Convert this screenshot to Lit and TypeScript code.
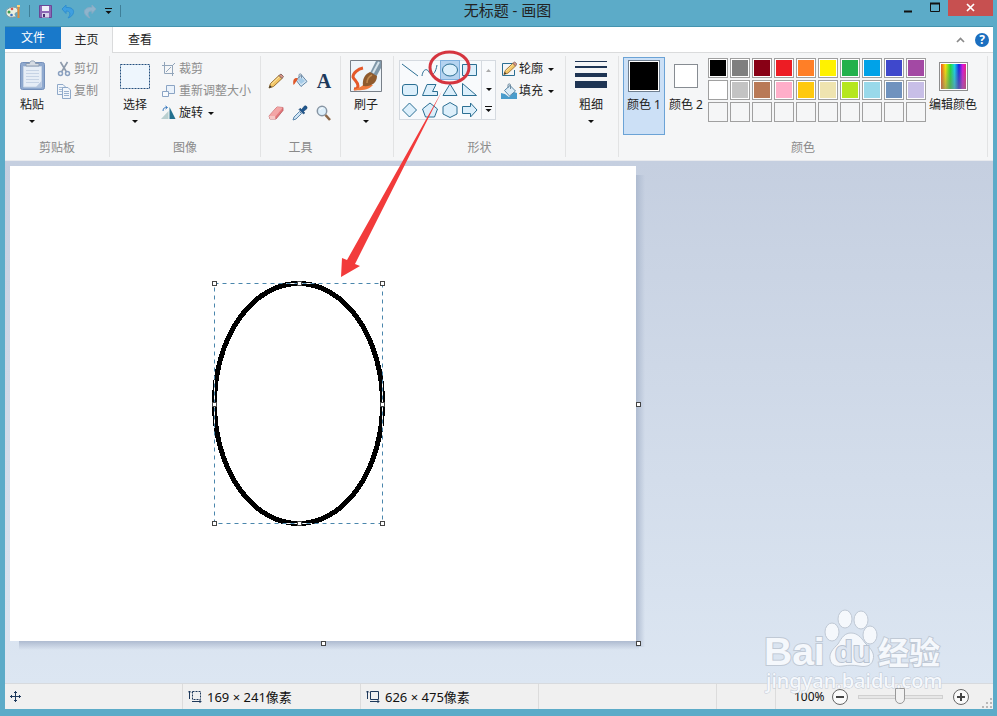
import { LitElement, html, css, svg } from "lit";
import { customElement } from "lit/decorators.js";
import { styleMap } from "lit/directives/style-map.js";
import { classMap } from "lit/directives/class-map.js";

const COLORS: (string | null)[] = [
  "#000000", "#7f7f7f", "#880015", "#ed1c24", "#ff7f27", "#fff200", "#22b14c", "#00a2e8", "#3f48cc", "#a349a4",
  "#ffffff", "#c3c3c3", "#b97a57", "#ffaec9", "#ffc90e", "#efe4b0", "#b5e61d", "#99d9ea", "#7092be", "#c8bfe7",
  null, null, null, null, null, null, null, null, null, null,
];

const SHAPES = [
  { name: "直线", art: svg`<path d="M2 4L18 16"/>` },
  { name: "曲线", art: svg`<path d="M2 16C3 9 7 8 9 12S15 16 17 5"/>` },
  { name: "椭圆形", art: svg`<ellipse cx="10" cy="10" rx="7.5" ry="6"/>` },
  { name: "矩形", art: svg`<path d="M2.5 4.500H16.500V15.500H2.500Z"/>` },
  { name: "圆角矩形", art: svg`<rect x="2.500" y="4.500" width="15" height="11" rx="2.500"/>` },
  { name: "多边形", art: svg`<path d="M2.500 15.500L7 4.500H16L12.500 11.500H17.500V15.500Z"/>` },
  { name: "三角形", art: svg`<path d="M10 4L17 15.500H3Z"/>` },
  { name: "直角三角形", art: svg`<path d="M2.500 3.500V15.500H16.500Z"/>` },
  { name: "菱形", art: svg`<path d="M9.500 3L16.500 10L9.500 17L2.500 10Z"/>` },
  { name: "五边形", art: svg`<path d="M10 3L17.500 9L14.500 17H5.500L2.500 9Z"/>` },
  { name: "六边形", art: svg`<path d="M10 2.500L17 6.500V14L10 17.500L3 14V6.500Z"/>` },
  { name: "右箭头", art: svg`<path d="M2.500 6.500H10.500V3L17 10L10.500 17V13.500H2.500Z"/>` },
];

const icon = (w: number, h: number, art: unknown) =>
  html`<svg class="icon" width=${w} height=${h} viewBox="0 0 ${w} ${h}" fill="none" aria-hidden="true">${art}</svg>`;

const caret = () => icon(6, 3, svg`<path d="M0 0H6L3 3Z" fill="#111"/>`);

const pencil = svg`<path d="M1 15L2.500 10.500L11 2.500L14 5.500L5.500 13.500Z" fill="#f3c667" stroke="#9a7133"/><path d="M3.500 11L11.500 3.500" stroke="#fbe9ae"/><path d="M11 2.500L13 1L15.500 3.500L14 5.500Z" fill="#d9958a" stroke="#8a6a62"/><path d="M1 15L2 12.200L3.800 14Z" fill="#333"/>`;

const art = {
  palette: svg`<path d="M1 8C1 3 12 1 13 6C14 9 10 8 10 10C10 12 13 13 9 13C4 14 1 12 1 8Z" fill="#e9f0e2" stroke="#7d98a0"/><circle cx="4" cy="8" r="1.500" fill="#3d9b50"/><circle cx="7" cy="5" r="1.300" fill="#d8574b"/><circle cx="6.500" cy="11" r="1.300" fill="#3a70c0"/><path d="M13.500 1V14" stroke="#e08a3a" stroke-width="2"/><path d="M12 2H15" stroke="#ffd27a" stroke-width="2"/>`,
  save: svg`<path d="M1.500 1.500H13.500V13.500H1.500Z" fill="#8d68b5" stroke="#6a4896"/><path d="M4 2H11V7H4Z" fill="#eef0f8"/><path d="M4 9H11V13.500H4Z" fill="#d8d3ea"/><path d="M5 10H7V13H5Z" fill="#4a3070"/>`,
  undo: svg`<path d="M1 5L5 1V3.500C11 3 13 6 12.500 8.500C12 11 10 13 7 14C10 10.500 9.500 7 5 7V9.500Z" fill="#3f9fe0" stroke="#2f8fd0"/>`,
  redo: svg`<path d="M13 5L9 1V3.500C3 3 1 6 1.500 8.500C2 11 4 13 7 14C4 10.500 4.500 7 9 7V9.500Z" fill="#8fb4cc" stroke="#86abc4"/>`,
  more: svg`<path d="M0 .500H7" stroke="#111"/><path d="M.500 3H6.500L3.500 6Z" fill="#111"/>`,
  paste: svg`<rect x="4.500" y="2.500" width="24" height="27" rx="2" fill="#8fa9cf" stroke="#7590ba"/><path d="M7.500 6.500H25.500V27H7.500Z" fill="#e6edf6" stroke="#c8d5e6"/><path d="M10 10.500H23M10 13.500H23M10 16.500H23M10 19.500H23M10 22.500H23" stroke="#c6d3e5"/><path d="M10 6V3.500H13.500C13.500 0 19.500 0 19.500 3.500H23V6Z" fill="#d5dbe3" stroke="#8b9bb0"/><path d="M20 27L25.500 21V27Z" fill="#b5c6df"/>`,
  cut: svg`<path d="M4.500 1L10.500 11M11.500 1L5.500 11" stroke="#8d9aab" stroke-width="1.600"/><circle cx="4.500" cy="12.500" r="2" stroke="#8aa0c0" stroke-width="1.500"/><circle cx="11.500" cy="12.500" r="2" stroke="#8aa0c0" stroke-width="1.500"/>`,
  copy: svg`<path d="M1.500 1.500H7L9.500 4V11.500H1.500Z" fill="#f2f6fb" stroke="#8fa9c9"/><path d="M3 4.500H7M3 6.500H7M3 8.500H7" stroke="#a8bdd6"/><path d="M6.500 4.500H12L14.500 7V15.500H6.500Z" fill="#f2f6fb" stroke="#8fa9c9"/><path d="M8 8.500H13M8 10.500H13M8 12.500H13" stroke="#9ab2cf"/>`,
  select: svg`<path d="M1.500 4.500H30.500V28.500H1.500Z" fill="#eef6fd" stroke="#24507f" stroke-dasharray="2 1"/>`,
  crop: svg`<path d="M3.500 1V12.500H13M1 4.500H11.500V15M11 5L14 2M5 11L10 6" stroke="#92a5ba"/>`,
  resize: svg`<path d="M5.500 2.500H13.500V10.500H5.500Z" fill="#eaf2fb" stroke="#8ba4c4"/><path d="M1.500 8.500H7.500V13.500H1.500Z" fill="#f7fafd" stroke="#8ba4c4"/>`,
  rotate: svg`<path d="M7.500 6V14H0Z" fill="#b9cfd0"/><path d="M8.500 2V14H14.500Z" fill="#23708f"/><path d="M2 6C2 3 4 2 6 2.500M4.500 1L6.500 2.500L4.500 4" stroke="#3b7bc0"/>`,
  pencil,
  bucket: svg`<path d="M4 7L9.500 2L15 8.500L9 13.500Z" fill="#d5e6f3" stroke="#5f86a8"/><path d="M7 5.500V2C7 .500 9.500 .500 9.500 2V7" stroke="#7890a8"/><path d="M5 6L10 5L13 8L9 11Z" fill="#a5cbe8"/><path d="M5.500 5C2 4.500 .500 7 1.500 12C3.500 10.500 4 8 5.500 7Z" fill="#e0592b"/>`,
  eraser: svg`<path d="M1 11L9 2L15 2.500L15 5.500L8 14H2Z" fill="#e2777b" stroke="#b9585d" stroke-width=".8"/><path d="M1 11L9 2L15 2.500L7.500 11.500Z" fill="#f3a6a6"/><path d="M1 11H7L7.500 14H2Z" fill="#f6c7c5"/>`,
  picker: svg`<path d="M1 15L2 12L7.500 6.500L9.500 8.500L4 14Z" fill="#cfe4f4" stroke="#5c87ad"/><path d="M7 4.500L11.500 9L12.800 8L11.500 6.500L15 3.500C15.500 1.500 14 .500 12.500 1L9.500 4.500L8.200 3.300Z" fill="#1f578f" stroke="#153f6b" stroke-width=".6"/>`,
  magnifier: svg`<circle cx="6" cy="6" r="4.700" fill="#ddeffb" stroke="#8795a3" stroke-width="1.500"/><path d="M9.500 10L14 15" stroke="#8b6748" stroke-width="2.600"/><path d="M4 5C4.500 3.500 6 3 7 3" stroke="#fff"/>`,
  brush: svg`<path d="M.500 .500H31.500V31.500H.500Z" fill="#eef4f9" stroke="#777f88"/><path d="M13 8C8 9 3 13 3 17C4 20 8 22 8 26C8 28 6 29 4 29" stroke="#e4582a" stroke-width="3"/><path d="M3 30C10 31 19 30 23 25L14 24C12 27 7 28 3 30Z" fill="#ee7a3e"/><path d="M26 1H31V8L26 17L20 13Z" fill="#7f97a8"/><path d="M29 2L23 13" stroke="#d5e2ea" stroke-width="2"/><path d="M13 26C12 19 15 14 20 12L27 16C27 23 21 27 13 26Z" fill="#8e5a2d"/><path d="M17 23C17 19 18 17 22 15" stroke="#c18a50" stroke-width="1.500"/>`,
  outline: svg`<path d="M12 2.500H1.500V14.500H13.500V9" stroke="#2b6f93"/><g transform="translate(2 0) scale(.9)">${pencil}</g>`,
  fill: svg`<path d="M0 10L4 11L8 14L13 9L16 10V16H0Z" fill="#4a9ccc"/><path d="M3.500 7.500L9 2.500L14.500 8L8.500 13Z" fill="#dcecf7" stroke="#5886a6"/><path d="M7 5V2C7 .500 9.500 .500 9.500 2V6" stroke="#6d8aa0"/>`,
  lines: svg`<path d="M0 1.500H32" stroke="#1f3554"/><path d="M0 7H32" stroke="#1f3554" stroke-width="2"/><path d="M0 15H32" stroke="#1f3554" stroke-width="4"/><path d="M0 24.500H32" stroke="#1f3554" stroke-width="7"/>`,
  move: svg`<path d="M5.500 0V11M0 5.500H11" stroke="#1e395b"/><path d="M4 2L5.500 .500L7 2M4 9L5.500 10.500L7 9M2 4L.500 5.500L2 7M9 4L10.500 5.500L9 7" stroke="#1e395b"/>`,
  selSize: svg`<path d="M1.500 1V9M0 2.500L1.500 1L3 2.500M4 11.500H13M11.500 10L13 11.500L11.500 13" stroke="#1e395b"/><path d="M4.500 1.500H12.500V9.500H4.500Z" stroke="#1e395b" stroke-dasharray="2 1"/>`,
  imgSize: svg`<path d="M1.500 1V9M0 2.500L1.500 1L3 2.500M4 11.500H13M11.500 10L13 11.500L11.500 13" stroke="#1e395b"/><path d="M4.500 1.500H12.500V9.500H4.500Z" stroke="#1e395b"/>`,
};

@customElement("app-root")
export class AppRoot extends LitElement {
  static styles = css`
    :host {
      display: flex;
      flex-direction: column;
      position: relative;
      box-sizing: border-box;
      min-height: 100vh;
      padding: 0 4px 7px 5px;
      overflow: hidden;
      background: #5cabc8;
      color: #222;
      font: 12px/16px "Noto Sans", "Noto Sans CJK SC", sans-serif;
    }
    * { box-sizing: border-box; }
    button {
      font: inherit;
      color: inherit;
      background: none;
      border: 0;
      margin: 0;
      padding: 0;
      white-space: nowrap;
    }
    .icon { display: block; flex: none; }

    .titlebar { display: flex; height: 26px; }
    .quick { display: flex; align-items: center; gap: 8px; height: 22px; }
    .quick button { display: flex; }
    .quick .rule { width: 1px; height: 12px; background: #3f7f98; }
    .title { flex: 1; margin: 0; text-align: center; font-size: 15px; font-weight: 400; line-height: 20px; }
    .controls { display: flex; align-items: flex-start; }
    .controls button { display: flex; align-items: center; justify-content: center; width: 27px; height: 16px; }
    .controls .close { width: 45px; padding-bottom: 2px; background: #c75050; }

    .tabs { display: flex; align-items: flex-end; height: 27px; background: #fff; border-bottom: 1px solid #dadbdc; border-top: 1px solid #4493ae; }
    .tabs .file { align-self: flex-start; width: 56px; height: 22px; background: #1979ca; color: #fff; }
    .tabs .tab { width: 54px; height: 25px; }
    .tabs .current { width: 52px; height: 26px; margin-bottom: -1px; background: #f5f6f7; border-right: 1px solid #dadbdc; }
    .tabs .aside { display: flex; align-items: center; align-self: center; gap: 10px; margin-left: auto; padding-right: 4px; }
    .tabs .aside button { display: flex; }
    .help { align-items: center; justify-content: center; width: 14px; height: 14px; border-radius: 50%; background: #1b6fc0; color: #fff; font-weight: 700; }

    .ribbon { display: flex; height: 108px; padding: 3px 0; background: #f5f6f7; border-bottom: 1px solid #e8eaee; }
    .group { display: flex; flex-direction: column; flex: none; border-right: 1px solid #e2e3e4; }
    .body { display: flex; height: 84px; gap: 4px; padding: 0 4px; }
    .caption { margin: 0; font-size: 12px; font-weight: 400; line-height: 18px; text-align: center; color: #8a8a8a; }
    .clip { width: 105px; }
    .image { width: 151px; }
    .tools { width: 80px; }
    .brushes, .size { width: 53px; }
    .shapes { width: 172px; }
    .clip .body { gap: 2px; padding-left: 6px; }
    .tools .body { display: grid; grid-template-columns: repeat(3, 24px); grid-auto-rows: 24px; align-content: start; gap: 8px 0; padding: 13px 0 0 3px; }
    .tools button { display: flex; align-items: center; justify-content: center; }
    .tools .letter { font: 700 20px/20px "Liberation Serif", serif; color: #1e395b; }
    .brushes .body, .size .body { padding: 0 5px 0 4px; }
    .colors .body { gap: 0; padding-right: 9px; }

    .big { display: flex; flex-direction: column; align-items: center; flex: none; width: 42px; height: 78px; padding-top: 4px; border: 0 solid #6ba3d6; }
    .big .face { display: flex; align-items: center; justify-content: center; width: 32px; height: 32px; margin-bottom: 5px; }
    .big .caret { margin-top: 7px; }
    .big.on { margin-top: 1px; padding-top: 2px; border-width: 1px; background: #cce0f6; }
    .big.wide { width: 50px; margin-left: 2px; }
    .well { width: 24px; height: 24px; border: 1px solid #878c92; background: #fff; }
    .on .well { width: 32px; height: 32px; border-color: #6f7f90; background: #000; box-shadow: inset 0 0 0 1px #fff; }
    .spectrum {
      width: 29px; height: 29px; border: 1px solid #8d8d8d; box-shadow: inset 0 0 0 1px #fff;
      background: linear-gradient(transparent, #80808099), linear-gradient(90deg, #f03020, #ffe800 20%, #20e030 38%, #10d8f0 54%, #1020e8 70%, #e010e0 84%, #f02060);
    }

    .stack { display: flex; flex-direction: column; align-items: flex-start; padding-top: 2px; }
    .small { display: flex; align-items: center; gap: 2px; height: 22px; padding: 0 1px; }
    .small .caret { margin-left: 3px; }
    .small:disabled { color: #8d8d8d; }

    .gallery { display: flex; width: 97px; height: 60px; margin: 4px 0 0 1px; border: 1px solid #d5dae0; background: #f8fafc; }
    .cells { display: grid; grid-template-columns: repeat(4, 20px); grid-auto-rows: 20px; width: 81px; margin-top: -1px; }
    .cells button { width: 20px; height: 20px; }
    .cells .icon { stroke: #2b6f93; fill: #dceffb; }
    .cells .open .icon { fill: none; }
    .cells .picked { background: #b5d3f0; box-shadow: inset 0 0 0 1px #7fb0dd; }
    .scroller { display: grid; grid-template-rows: repeat(3, 1fr); flex: 1; border-left: 1px solid #d5dae0; }
    .scroller button { display: flex; align-items: center; justify-content: center; }

    .swatches { display: grid; grid-template-columns: repeat(10, 20px); grid-auto-rows: 20px; align-content: start; gap: 2px; margin: 2px 0 0 1px; }
    .swatch { border: 1px solid #a0a0a0; box-shadow: inset 0 0 0 1px #fff; }

    .stage { flex: 1; padding: 5px; background: linear-gradient(#c5cfe0, #dce6f2); }
    .paper { position: relative; width: 626px; height: 475px; background: #fff; }
    .paper::before, .paper::after { content: ""; position: absolute; }
    .paper::before { left: 100%; top: 9px; bottom: -6px; width: 9px; background: linear-gradient(90deg, #aebbd0, #aebbd000); }
    .paper::after { top: 100%; left: 9px; right: -3px; height: 9px; background: linear-gradient(#aebbd0, #aebbd000); }
    .drawing { display: block; }
    .grip { position: absolute; z-index: 1; width: 5px; height: 5px; border: 1px solid #444; background: #fff; }
    .grip.e { left: 100%; top: 236px; }
    .grip.s { top: 100%; left: 311px; }
    .grip.se { left: 100%; top: 100%; }

    .status { display: flex; height: 26px; background: #f0f0f0; border-top: 1px solid #d7dade; }
    .cell { display: flex; align-items: center; flex: none; gap: 5px; width: 178px; padding-left: 5px; border-right: 1px solid #dcdcdc; color: #111; font-size: 13px; }
    .cell.short { width: 59px; }
    .zoom { display: flex; align-items: center; flex: 1; gap: 7px; padding-left: 18px; color: #111; }
    .zoom button { display: flex; }
    .zoom input { appearance: none; flex: none; width: 85px; height: 16px; margin: 0 3px; padding: 0; background: none; }
    .zoom input::-webkit-slider-runnable-track { height: 4px; border: 1px solid #d0d0d0; background: #e7e7e7; }
    .zoom input::-webkit-slider-thumb {
      appearance: none; width: 10px; height: 16px; margin-top: -8px;
      border: 1px solid #999; border-radius: 0 0 5px 5px; background: #f2f2f2;
    }
    .corner { align-self: flex-end; margin-left: auto; padding: 0 1px 1px 0; }

    .pointer { position: absolute; left: 330px; top: 45px; z-index: 2; pointer-events: none; }
    .mark { position: absolute; right: 52px; bottom: 20px; z-index: 2; pointer-events: none; }
    .mark text { fill: #f5f8fc; stroke: #c0c9d5; stroke-width: 2px; paint-order: stroke; }
    .mark .latin { font: 700 39px "Liberation Sans", sans-serif; }
    .mark .du { font: 700 29px "Liberation Sans", sans-serif; fill: #dde5f0; stroke: #b9c3d1; }
    .mark .han { font: 700 31px "Noto Sans CJK SC", sans-serif; }
    .mark .site { font: 500 20px "Noto Sans", sans-serif; stroke-width: 1px; }
  `;

  private small(label: string, picture: unknown, opts: { off?: boolean; menu?: boolean } = {}) {
    return html`<button class="small" ?disabled=${opts.off}>
      ${icon(16, 16, picture)}<span>${label}</span>${opts.menu ? html`<span class="caret">${caret()}</span>` : null}
    </button>`;
  }

  private big(label: string, face: unknown, menu = true, extra = "") {
    return html`<button class="big ${extra}">
      <span class="face">${face}</span><span>${label}</span>
      ${menu ? html`<span class="caret">${caret()}</span>` : null}
    </button>`;
  }

  private titlebar() {
    return html`<header class="titlebar">
      <div class="quick">
        ${icon(16, 15, art.palette)}<span class="rule"></span>
        <button aria-label="保存">${icon(15, 15, art.save)}</button>
        <button aria-label="撤消">${icon(14, 15, art.undo)}</button>
        <button aria-label="重做">${icon(14, 15, art.redo)}</button>
        <button aria-label="自定义快速访问工具栏">${icon(7, 6, art.more)}</button>
        <span class="rule"></span>
      </div>
      <h1 class="title">无标题 - 画图</h1>
      <div class="controls">
        <button aria-label="最小化">${icon(10, 12, svg`<path d="M1 9.500H9" stroke="#111" stroke-width="2"/>`)}</button>
        <button aria-label="最大化">${icon(12, 12, svg`<path d="M1.500 1.500H10.500V9.500H1.500Z" stroke="#111"/><path d="M1 1.500H11" stroke="#111" stroke-width="2"/>`)}</button>
        <button class="close" aria-label="关闭">${icon(9, 9, svg`<path d="M1 1L8 8M8 1L1 8" stroke="#fff" stroke-width="1.700"/>`)}</button>
      </div>
    </header>`;
  }

  private ribbon() {
    return html`<section class="ribbon">
      <div class="group clip">
        <div class="body">
          ${this.big("粘贴", icon(32, 32, art.paste))}
          <div class="stack">
            ${this.small("剪切", art.cut, { off: true })}
            ${this.small("复制", art.copy, { off: true })}
          </div>
        </div>
        <h2 class="caption">剪贴板</h2>
      </div>
      <div class="group image">
        <div class="body">
          ${this.big("选择", icon(32, 32, art.select))}
          <div class="stack">
            ${this.small("裁剪", art.crop, { off: true })}
            ${this.small("重新调整大小", art.resize, { off: true })}
            ${this.small("旋转", art.rotate, { menu: true })}
          </div>
        </div>
        <h2 class="caption">图像</h2>
      </div>
      <div class="group tools">
        <div class="body">
          <button aria-label="铅笔">${icon(16, 16, art.pencil)}</button>
          <button aria-label="用颜色填充">${icon(16, 16, art.bucket)}</button>
          <button class="letter" aria-label="文本">A</button>
          <button aria-label="橡皮擦">${icon(16, 16, art.eraser)}</button>
          <button aria-label="颜色选取器">${icon(16, 16, art.picker)}</button>
          <button aria-label="放大镜">${icon(16, 16, art.magnifier)}</button>
        </div>
        <h2 class="caption">工具</h2>
      </div>
      <div class="group brushes">
        <div class="body">${this.big("刷子", icon(32, 32, art.brush))}</div>
      </div>
      <div class="group shapes">
        <div class="body">
          <div class="gallery">
            <div class="cells">
              ${SHAPES.map((s, i) => html`<button class=${classMap({ picked: i === 2, open: i < 2 })} aria-label=${s.name}>${icon(20, 20, s.art)}</button>`)}
            </div>
            <div class="scroller">
              <button aria-label="上一行">${icon(5, 3, svg`<path d="M0 3H5L2.500 0Z" fill="#aaa"/>`)}</button>
              <button aria-label="下一行">${caret()}</button>
              <button aria-label="更多形状">${icon(7, 6, art.more)}</button>
            </div>
          </div>
          <div class="stack">
            ${this.small("轮廓", art.outline, { menu: true })}
            ${this.small("填充", art.fill, { menu: true })}
          </div>
        </div>
        <h2 class="caption">形状</h2>
      </div>
      <div class="group size">
        <div class="body">${this.big("粗细", icon(32, 32, art.lines))}</div>
      </div>
      <div class="group colors">
        <div class="body">
          ${this.big("颜色 1", html`<span class="well"></span>`, false, "on")}
          ${this.big("颜色 2", html`<span class="well"></span>`, false)}
          <div class="swatches">
            ${COLORS.map((c, i) => html`<button class="swatch" aria-label="色块 ${i + 1}" style=${styleMap(c ? { background: c } : { boxShadow: "none" })}></button>`)}
          </div>
          ${this.big("编辑颜色", html`<span class="spectrum"></span>`, false, "wide")}
        </div>
        <h2 class="caption">颜色</h2>
      </div>
    </section>`;
  }

  private canvas() {
    const spots = [[204, 117], [289, 117], [372, 117], [204, 238], [372, 238], [204, 357], [289, 357], [372, 357]];
    return html`<main class="stage">
      <div class="paper">
        <svg class="drawing" width="626" height="475" viewBox="0 0 626 475" fill="none" role="img" aria-label="椭圆">
          <ellipse cx="288.500" cy="237.500" rx="84" ry="120" stroke="#000" stroke-width="5" shape-rendering="crispEdges"/>
          <path d="M204.500 214V262M372.500 214V262M276 117.500H302M276 357.500H302" stroke="#fff"/>
          <path d="M204.500 117.500H372.500V357.500H204.500Z" stroke="#4a86ac" stroke-dasharray="4 4"/>
          ${spots.map(([x, y]) => svg`<rect x=${x - 1.5} y=${y - 1.5} width="4" height="4" fill="#fff" stroke="#444"/>`)}
        </svg>
        <span class="grip e"></span><span class="grip s"></span><span class="grip se"></span>
      </div>
    </main>`;
  }

  private status() {
    const round = (d: string) => icon(16, 16, svg`<circle cx="8" cy="8" r="7.500" fill="#fafafa" stroke="#666"/><path d=${d} stroke="#444" stroke-width="2"/>`);
    return html`<footer class="status">
      <div class="cell">${icon(11, 11, art.move)}</div>
      <div class="cell">${icon(14, 14, art.selSize)}<span>169 × 241像素</span></div>
      <div class="cell">${icon(14, 14, art.imgSize)}<span>626 × 475像素</span></div>
      <div class="cell"></div>
      <div class="cell short"></div>
      <div class="zoom">
        <output>100%</output>
        <button aria-label="缩小">${round("M4 8H12")}</button>
        <input type="range" min="0" max="100" value="50" aria-label="缩放" />
        <button aria-label="放大">${round("M4 8H12M8 4V12")}</button>
        <span class="corner">${icon(10, 10, svg`<path d="M8 1H10M4 5H6M8 5H10M0 9H2M4 9H6M8 9H10" stroke="#b8b8b8" stroke-width="2"/>`)}</span>
      </div>
    </footer>`;
  }

  render() {
    return html`
      ${this.titlebar()}
      <nav class="tabs">
        <button class="file">文件</button>
        <button class="tab current">主页</button>
        <button class="tab">查看</button>
        <div class="aside">
          <button aria-label="折叠功能区">${icon(9, 6, svg`<path d="M1 5L4.500 1.500L8 5" stroke="#8a8a8a" stroke-width="1.700"/>`)}</button>
          <button class="help" aria-label="帮助">?</button>
        </div>
      </nav>
      ${this.ribbon()} ${this.canvas()} ${this.status()}
      <svg class="pointer" width="150" height="236" viewBox="0 0 150 236" fill="none" aria-hidden="true">
        <ellipse cx="119.500" cy="22.500" rx="19.500" ry="15.500" stroke="#d5353f" stroke-width="3"/>
        <path d="M112 46L25 219L30 221L11 232L12 213L17 215Z" fill="#f23b3b"/>
      </svg>
      <svg class="mark" width="182" height="90" viewBox="0 0 182 90" aria-hidden="true">
        <text class="latin" x="1" y="59">Bai</text>
        <g fill="#f5f8fc" stroke="#c0c9d5">
          <ellipse cx="69" cy="26" rx="7" ry="9"/><ellipse cx="82" cy="13" rx="7" ry="9"/>
          <ellipse cx="98" cy="14" rx="7" ry="9"/><ellipse cx="107" cy="29" rx="7" ry="9"/>
          <path d="M88 27C94 27 98 31 102 37C108 43 112 47 110 54C108 61 101 61 96 60C90 59 86 59 80 60C74 61 68 60 67 53C66 47 70 43 75 38C79 31 82 27 88 27Z"/>
        </g>
        <text class="du" x="72" y="56">du</text>
        <text class="han" x="115" y="58">经验</text>
        <text class="site" x="3" y="82">jingyan.baidu.com</text>
      </svg>
    `;
  }
}
